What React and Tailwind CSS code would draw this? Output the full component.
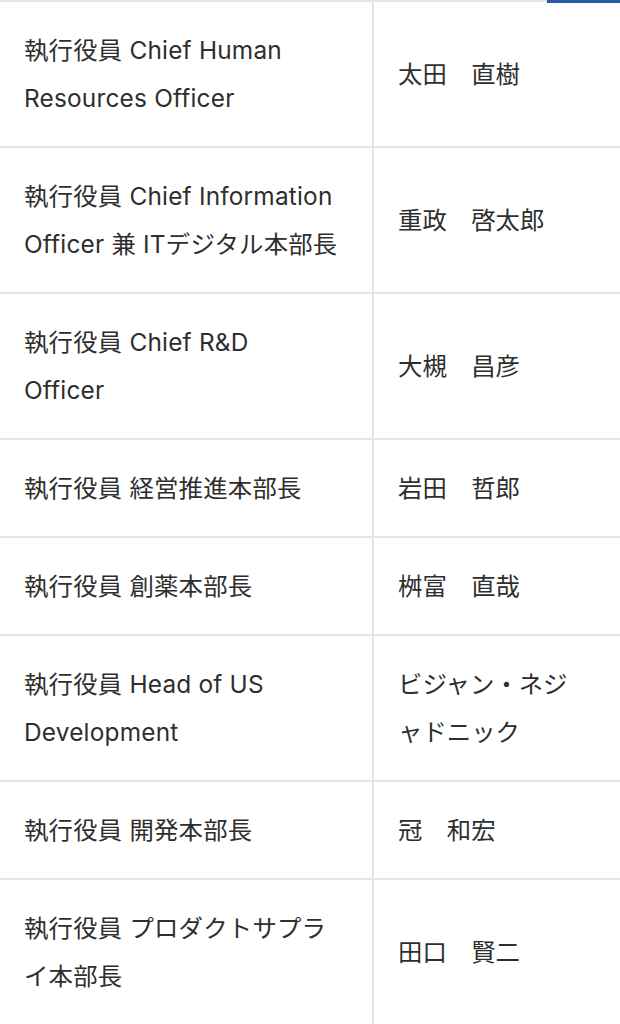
import React from 'react'

const officers = [
  { title: ['執行役員 Chief Human', 'Resources Officer'], name: ['太田　直樹'] },
  { title: ['執行役員 Chief Information', 'Officer 兼 ITデジタル本部長'], name: ['重政　啓太郎'] },
  { title: ['執行役員 Chief R&D', 'Officer'], name: ['大槻　昌彦'] },
  { title: ['執行役員 経営推進本部長'], name: ['岩田　哲郎'] },
  { title: ['執行役員 創薬本部長'], name: ['桝富　直哉'] },
  { title: ['執行役員 Head of US', 'Development'], name: ['ビジャン・ネジ', 'ャドニック'] },
  { title: ['執行役員 開発本部長'], name: ['冠　和宏'] },
  { title: ['執行役員 プロダクトサプラ', 'イ本部長'], name: ['田口　賢二'] },
]

const Lines = ({ lines }) => (
  <>
    {lines.map((l, i) => (
      <span key={i} className="block whitespace-nowrap">{l}</span>
    ))}
  </>
)

const App = () => {
  return (
    <div
      className="relative w-[620px] min-h-[1024px] bg-white text-[#2e2e2e] text-[24.4px] leading-[48px]"
      style={{ fontFamily: 'Inter, "Noto Sans CJK JP", sans-serif' }}
    >
      {/* blue indicator at the top right */}
      <div className="absolute top-0 right-0 w-[73px] h-[3px] bg-[#2b5ba9]" />

      <div className="border-t-2 border-[#e6e6e6]">
        {officers.map((o, i) => (
          <div key={i} className="flex border-b-2 border-[#e6e6e6]">
            <div className="w-[374px] shrink-0 border-r-2 border-[#e6e6e6] pl-6 pr-4 py-6 tracking-[0.2px]">
              <Lines lines={o.title} />
            </div>
            <div className="flex-1 flex items-center pl-6 pr-4 py-6">
              <div>
                <Lines lines={o.name} />
              </div>
            </div>
          </div>
        ))}
      </div>
    </div>
  )
}

export default App
